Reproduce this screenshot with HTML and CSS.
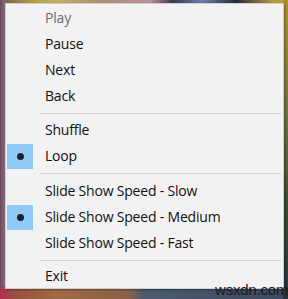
FILE: index.html
```html
<!DOCTYPE html>
<html>
<head>
<meta charset="utf-8">
<link rel="stylesheet" href="styles.css">
</head>
<body>
<div class="scene">
  <div class="menu">
    <div class="item disabled"><span class="check"></span><span class="label">Play</span></div>
    <div class="item"><span class="check"></span><span class="label">Pause</span></div>
    <div class="item"><span class="check"></span><span class="label">Next</span></div>
    <div class="item"><span class="check"></span><span class="label">Back</span></div>
    <div class="sep"></div>
    <div class="item"><span class="check"></span><span class="label">Shuffle</span></div>
    <div class="item"><span class="check on"><span class="dot"></span></span><span class="label">Loop</span></div>
    <div class="sep wide"></div>
    <div class="item"><span class="check"></span><span class="label">Slide Show Speed - Slow</span></div>
    <div class="item"><span class="check on"><span class="dot"></span></span><span class="label">Slide Show Speed - Medium</span></div>
    <div class="item"><span class="check"></span><span class="label">Slide Show Speed - Fast</span></div>
    <div class="sep"></div>
    <div class="item last"><span class="check"></span><span class="label">Exit</span></div>
  </div>
  <div class="watermark">wsxdn.com</div>
</div>
</body>
</html>
```
FILE: styles.css
```css
html, body {
  margin: 0;
  padding: 0;
}
body {
  width: 288px;
  height: 299px;
  overflow: hidden;
}
.scene {
  position: relative;
  width: 288px;
  height: 299px;
  box-sizing: border-box;
  padding: 3px 4px 0 5px;
  background:
    linear-gradient(90deg, #6a4a5a 0px, #8a6a80 5px, rgba(0,0,0,0) 6px),
    linear-gradient(90deg, #7a5a50 0%, #b8a040 12%, #c9b060 20%, #a89070 35%, #c090a0 52%, #3a3a50 60%, #6a80b0 70%, #2a2a3a 82%, #b89a40 95%, #c0a040 100%);
}
.scene::before {
  content: "";
  position: absolute;
  left: 0;
  right: 0;
  bottom: 0;
  height: 12px;
  background: linear-gradient(90deg, #b03050 0%, #9a5040 5%, #a06a40 20%, #8a6048 45%, #4a5a70 50%, #3a4a60 100%);
}
.scene::after {
  content: "";
  position: absolute;
  top: 0;
  right: 0;
  width: 5px;
  bottom: 0;
  background: linear-gradient(180deg, #b09030 0%, #6a7040 40%, #3a4a30 70%, #2a3040 100%);
}
.menu {
  position: relative;
  z-index: 1;
  width: 279px;
  box-sizing: border-box;
  background: #f2f2f2;
  border: 1px solid #cfcfcf;
  box-shadow: 1px 1px 2px rgba(0,0,0,0.35);
  padding-top: 1px;
  font-family: "Open Sans", "Noto Sans", sans-serif;
  font-size: 14px;
  letter-spacing: -0.2px;
  color: #111;
}
.item {
  display: flex;
  align-items: center;
  height: 26px;
}
.item.last {
  height: 24px;
}
.check {
  width: 26px;
  height: 25px;
  margin-left: 1px;
  display: flex;
  align-items: center;
  justify-content: center;
  flex: none;
}
.check.on {
  background: #91c9f7;
}
.dot {
  width: 7px;
  height: 7px;
  border-radius: 50%;
  background: #1b2230;
}
.label {
  margin-left: 12px;
  line-height: 26px;
  white-space: nowrap;
}
.disabled .label {
  color: #6d6d6d;
}
.sep {
  height: 8px;
  display: flex;
  align-items: center;
  padding-left: 34px;
  padding-right: 2px;
}
.sep.wide {
  height: 9px;
}
.sep::before {
  content: "";
  flex: 1;
  height: 1px;
  background: #d2d2d2;
}
.watermark {
  position: absolute;
  z-index: 2;
  left: 215px;
  top: 281px;
  font-family: "Liberation Sans", Arial, sans-serif;
  font-size: 15px;
  color: #1a1a1a;
  letter-spacing: -0.2px;
}
```
